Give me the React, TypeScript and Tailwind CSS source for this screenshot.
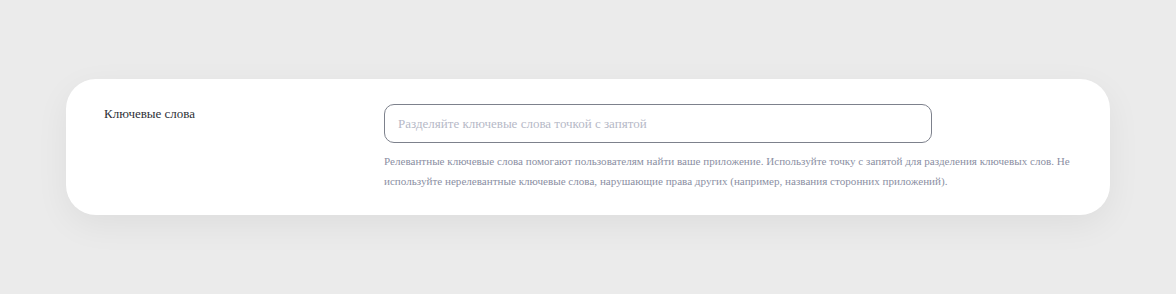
export default function App() {
  return (
    <div className="min-h-[294px] w-full bg-[#ebebeb] pt-[79px] px-[66px] font-['Liberation_Serif']">
      <div className="flex w-[1044px] rounded-[30px] bg-white pl-[38px] pr-[34px] pt-[25px] pb-[24px] shadow-[0_10px_34px_rgba(0,0,0,0.06)]">
        <div className="w-[280px] shrink-0 pt-[1px] text-[13px] leading-[18px] text-[#2d2f36]">Ключевые слова</div>
        <div className="flex-1">
          <div className="flex h-[39px] w-[548px] items-center rounded-[10px] border border-[#7d818c] px-[13px] text-[13px] text-[#b6b9c7]">
            Разделяйте ключевые слова точкой с запятой
          </div>
          <p className="mt-[8px] text-[11.1px] leading-[20px] text-[#8b8fa3]">
            Релевантные ключевые слова помогают пользователям найти ваше приложение. Используйте точку с запятой для разделения ключевых слов. Не используйте нерелевантные ключевые слова, нарушающие права других (например, названия сторонних приложений).
          </p>
        </div>
      </div>
    </div>
  );
}
